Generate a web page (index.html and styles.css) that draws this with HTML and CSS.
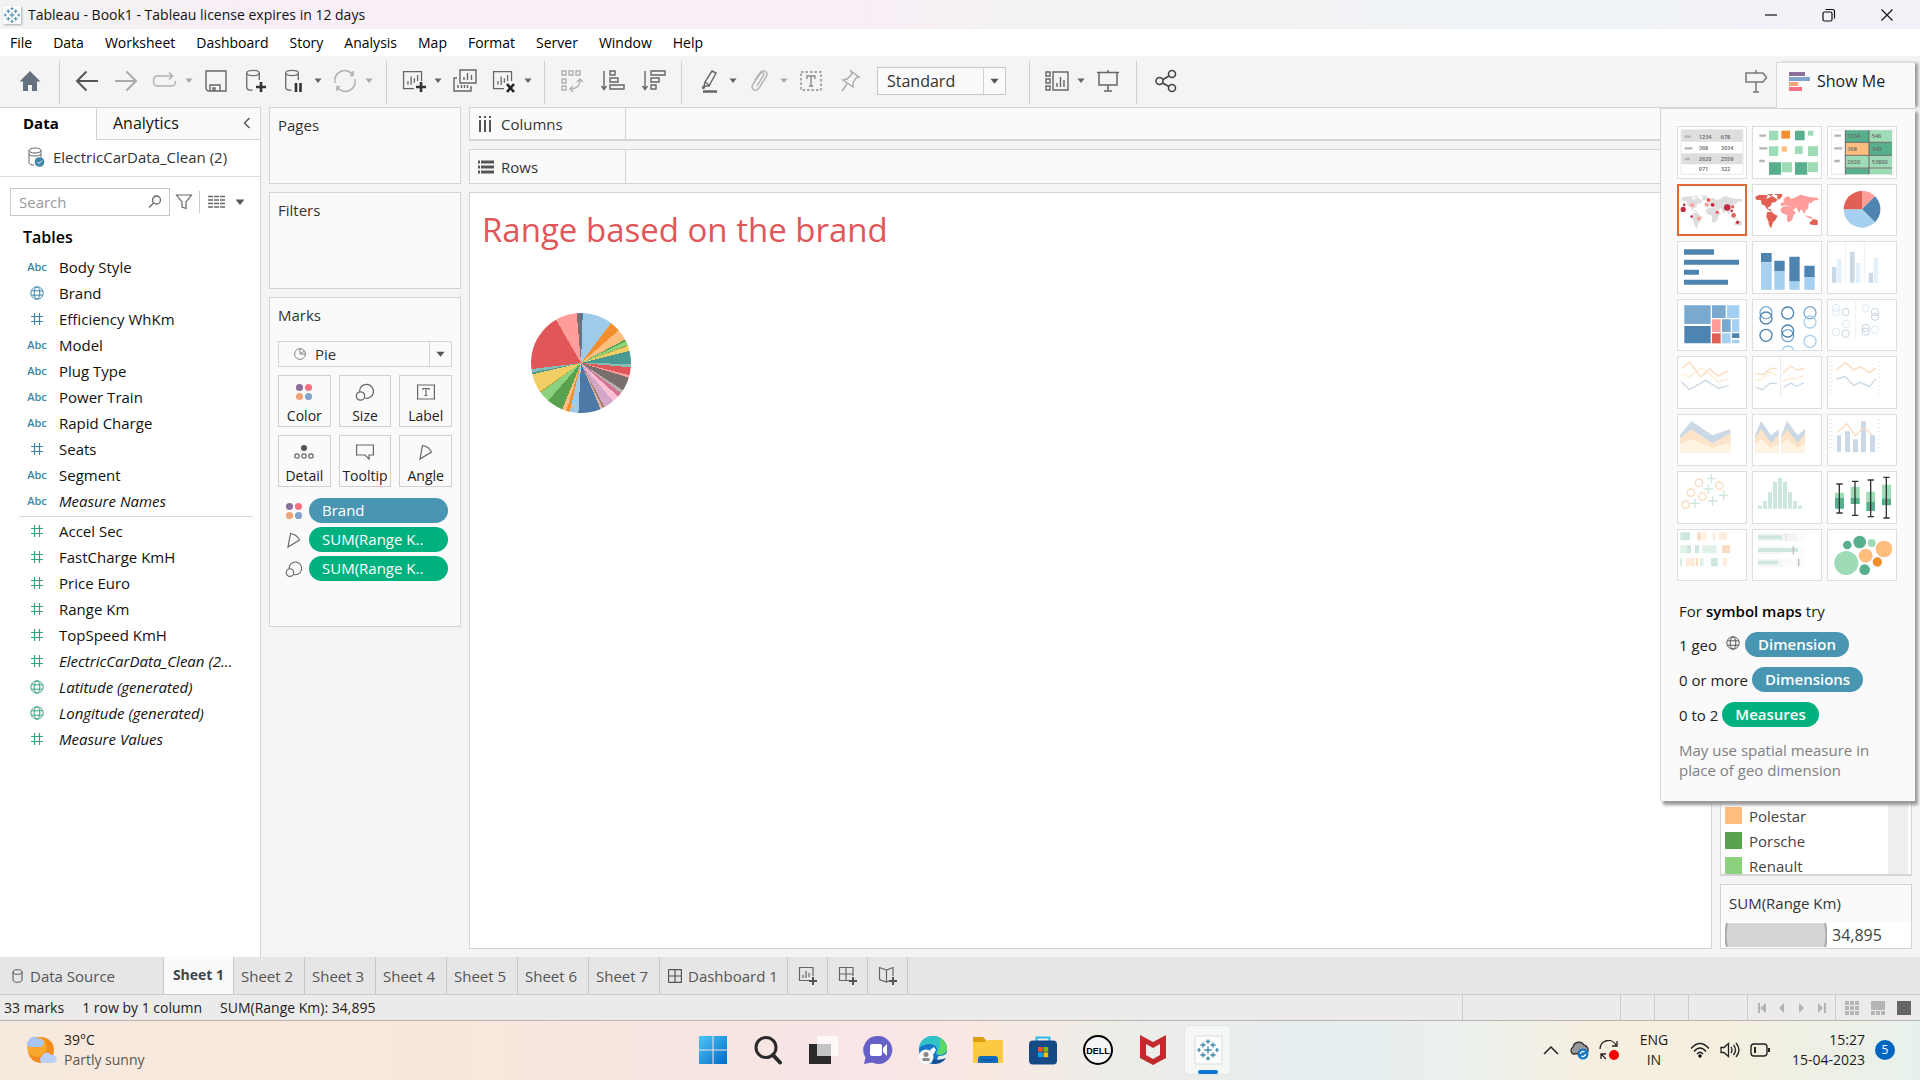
FILE: index.html
```html
<!DOCTYPE html>
<html lang="en">
<head>
<meta charset="utf-8">
<meta name="viewport" content="width=device-width, initial-scale=1">
<title>Tableau - Book1</title>
<link rel="stylesheet" href="styles.css">
</head>
<body>
<svg class="defs" aria-hidden="true">
  <symbol id="globe" viewBox="0 0 14 14"><g fill="none" stroke="currentColor" stroke-width="1"><circle cx="7" cy="7" r="6.200"/><ellipse cx="7" cy="7" rx="2.800" ry="6.200"/><path d="M1.500 4.800h11M1.500 9.200h11"/></g></symbol>
  <symbol id="hash" viewBox="0 0 14 14"><path d="M4.500 1v12M9.500 1v12M1 4.500h12M1 9.500h12" fill="none" stroke="currentColor" stroke-width="1.200"/></symbol>
  <symbol id="dots" viewBox="0 0 18 18"><circle cx="4.500" cy="4.500" r="3.600" fill="#8b6f9b"/><circle cx="13.500" cy="4.500" r="3.600" fill="#fa7083"/><circle cx="4.500" cy="13.500" r="3.600" fill="#f2a479"/><circle cx="13.500" cy="13.500" r="3.600" fill="#81a4cd"/></symbol>
  <symbol id="size" viewBox="0 0 20 18"><g fill="none" stroke="#666" stroke-width="1.200"><path d="M4.500 8.500a7 7 0 1 1 5 6.500"/><circle cx="5.500" cy="13" r="4.200"/></g></symbol>
  <symbol id="angle" viewBox="0 0 18 18"><path d="M5.500 2.500L3 16L14.500 9C13 6 9.500 3 5.500 2.500z" fill="none" stroke="#666" stroke-width="1.200"/></symbol>
  <symbol id="tri" viewBox="0 0 10 6"><path d="M.5.5h9L5 6z" fill="currentColor"/></symbol>
  <symbol id="db" viewBox="0 0 24 24"><g fill="none" stroke="#707070" stroke-width="1.400"><ellipse cx="10" cy="4" rx="6.300" ry="2.600"/><path d="M3.700 4v14.500c0 1.800 2.500 2.800 5.800 2.800M16.300 4v7"/></g></symbol>
  <symbol id="sheet" viewBox="0 0 24 24"><g fill="none" stroke="#666" stroke-width="1.400"><path d="M21.300 12V1.700H1.700v18.600H13"/><path d="M6.500 16v-4M10 16V7M13.500 14V9M17 12V5.500"/></g></symbol>
  <symbol id="plus" viewBox="0 0 10 10"><path d="M5 0v10M0 5h10" stroke="#333" stroke-width="2.600"/></symbol>
  <symbol id="logo" viewBox="0 0 24 24"><path d="M12 8.500v7M8.500 12h7M12 1.500v4M10 3.500h4M12 18.500v4M10 20.500h4M7 4.500v5M4.500 7h5M17 4.500v5M14.500 7h5M7 14.500v5M4.500 17h5M17 14.500v5M14.500 17h5M3 10v4M1.500 12h3M21 10v4M19.500 12h3" stroke="#3f86ad" stroke-width="1.300" fill="none"/></symbol>
  <symbol id="world" viewBox="0 0 204 150"><path d="M6 36L18 30L44 30L40 42L58 33L74 44L66 52L56 53L54 62L44 68L46 72L52 72L58 80L48 76L40 70L36 62L26 58L24 46L10 44z M42 28L60 27L54 34z M62 27L88 27L86 36L78 44L72 40L74 32z"/><path d="M42 82L56 80L64 88L74 92L68 104L60 112L54 130L48 120L46 108L40 96z"/><path class="east" d="M82 72L92 64L106 64L116 68L122 78L130 82L122 90L118 104L108 112L102 108L102 90L96 88L86 84z M82 62L84 54L92 52L92 42L102 34L110 36L114 42L130 36L142 29L168 36L194 38L196 46L188 46L180 48L176 54L168 54L166 62L166 72L158 74L156 86L152 84L148 76L142 74L140 84L134 76L128 66L122 76L114 66L104 62L96 60L88 62z M154 90L176 96L182 102L168 100z"/><path d="M170 112L182 102L194 106L194 120L182 120L170 118z"/></symbol>
</svg>

<div class="app">
  <header class="titlebar">
    <span class="app-icon"><svg width="18" height="18"><use href="#logo"/></svg></span>
    <span class="app-title">Tableau - Book1 - Tableau license expires in 12 days</span>
    <div class="window-buttons">
      <button aria-label="Minimise"><svg width="14" height="14"><path d="M1 7h12" stroke="#111" stroke-width="1.200"/></svg></button>
      <button aria-label="Restore"><svg width="14" height="14" fill="none" stroke="#111" stroke-width="1.200"><rect x="1" y="4" width="9" height="9" rx="1.500"/><path d="M3.500 1.500h7a2 2 0 0 1 2 2v7"/></svg></button>
      <button aria-label="Close"><svg width="14" height="14"><path d="M1.500 1.500l11 11M12.500 1.500l-11 11" stroke="#111" stroke-width="1.200"/></svg></button>
    </div>
  </header>

  <nav class="menubar">
    <button>File</button><button>Data</button><button>Worksheet</button><button>Dashboard</button><button>Story</button><button>Analysis</button><button>Map</button><button>Format</button><button>Server</button><button>Window</button><button>Help</button>
  </nav>

  <div class="toolbar">
    <div class="group home">
      <button aria-label="Home"><svg viewBox="0 0 24 24"><path d="M12 2L1.500 12.500H5V22h5v-6h4v6h5v-9.500h3.500z" fill="#667180"/></svg></button>
    </div>
    <div class="group">
      <button aria-label="Back"><svg viewBox="0 0 24 24" fill="none" stroke="#555" stroke-width="2"><path d="M23 12H2M11.500 2.500L2 12l9.500 9.500"/></svg></button>
      <button aria-label="Forward"><svg viewBox="0 0 24 24" fill="none" stroke="#aaa" stroke-width="2"><path d="M1 12h21M12.500 2.500L22 12l-9.500 9.500"/></svg></button>
      <div class="split off"><button aria-label="Replay"><svg viewBox="0 0 24 24" fill="none" stroke="#b0b0b0" stroke-width="1.500"><path d="M19 7H4.500a4 4 0 0 0-4 4v2a4 4 0 0 0 4 4h14a4 4 0 0 0 4-4v-1"/><path d="M16 3.500L19.500 7 16 10.500"/></svg></button><button class="caret" aria-label="Replay options"><svg><use href="#tri"/></svg></button></div>
      <button aria-label="Save"><svg viewBox="0 0 24 24" fill="none" stroke="#666" stroke-width="1.400"><path d="M2 2h20v20H4l-2-2z"/><path d="M6 22v-6h10v6M9 22v-3h2v3"/></svg></button>
      <button aria-label="New data source"><svg viewBox="0 0 24 24"><use href="#db" width="24" height="24"/><use href="#plus" x="13" y="13" width="10" height="10"/></svg></button>
      <div class="split"><button aria-label="Pause updates"><svg viewBox="0 0 24 24"><use href="#db" width="24" height="24"/><path d="M14 14v9M18.500 14v9" stroke="#333" stroke-width="2.600"/></svg></button><button class="caret" aria-label="Pause options"><svg><use href="#tri"/></svg></button></div>
      <div class="split off"><button aria-label="Refresh"><svg viewBox="0 0 24 24" fill="none" stroke="#b0b0b0" stroke-width="1.500"><path d="M2 14A10 10 0 0 1 20 6M22 10a10 10 0 0 1-18 8M20 2v4.500M4 22v-4.500M17 6.500h3.500M3.500 17.500H7"/></svg></button><button class="caret" aria-label="Refresh options"><svg><use href="#tri"/></svg></button></div>
    </div>
    <div class="group">
      <div class="split"><button aria-label="New worksheet"><svg viewBox="0 0 24 24"><use href="#sheet" width="22" height="24"/><use href="#plus" x="14" y="13" width="10" height="10"/></svg></button><button class="caret" aria-label="New options"><svg><use href="#tri"/></svg></button></div>
      <button aria-label="Duplicate"><svg viewBox="0 0 24 24" fill="none" stroke="#666" stroke-width="1.400"><path d="M7 1h16v13H7zM11 11V8M14.500 11V4M18.500 11V6M4 9H1v13h17v-5M5 16v3M8.500 16v3M11.500 16v3M14.500 16v3"/></svg></button>
      <div class="split"><button aria-label="Clear sheet"><svg viewBox="0 0 24 24"><use href="#sheet" width="22" height="24"/><path d="M15 15l7 8M22 15l-7 8" stroke="#222" stroke-width="2.600"/></svg></button><button class="caret" aria-label="Clear options"><svg><use href="#tri"/></svg></button></div>
    </div>
    <div class="group sorting">
      <button aria-label="Swap"><svg viewBox="0 0 24 24" fill="none" stroke="#b0b0b0" stroke-width="1.400"><path d="M2 2h4v4H2zM9 2h4v4H9zM16 2h4v4h-4zM2 10h4v4H2zM2 17h4v4H2zM10 20c6 0 10-3 10-9M13 17l-3 3 3 3M17 13l3-3 3 3"/></svg></button>
      <button aria-label="Sort ascending"><svg viewBox="0 0 24 24" fill="none" stroke="#666" stroke-width="1.400"><path d="M3 2v18M.5 17L3 20.500 5.500 17M9 2h5v4H9zM9 9h8v4H9zM9 16h14v4H9z"/></svg></button>
      <button aria-label="Sort descending"><svg viewBox="0 0 24 24" fill="none" stroke="#666" stroke-width="1.400"><path d="M3 2v18M.5 17L3 20.500 5.500 17M9 2h14v4H9zM9 9h8v4H9zM9 16h5v4H9z"/></svg></button>
    </div>
    <div class="group">
      <div class="split"><button aria-label="Highlight"><svg viewBox="0 0 24 24" fill="none" stroke="#666" stroke-width="1.400"><path d="M15 2l4 2-7 13H7l1-4zM8 13l4 3"/><path d="M6 22.500h14M5 19l3-1" stroke-width="2.400"/></svg></button><button class="caret" aria-label="Highlight options"><svg><use href="#tri"/></svg></button></div>
      <div class="split off"><button aria-label="Group"><svg viewBox="0 0 24 24" fill="none" stroke="#b0b0b0" stroke-width="1.400"><path d="M9 17l6-10c2-3-1-5-3-2L5 15c-3 5 3 9 6 4l7-11c3-5-3-9-6-4L7 11"/></svg></button><button class="caret" aria-label="Group options"><svg><use href="#tri"/></svg></button></div>
      <button aria-label="Show mark labels"><svg viewBox="0 0 24 24" fill="none" stroke="#888" stroke-width="1.400"><path d="M2 3h20v18H2z" stroke-dasharray="2.500 2"/><path d="M8 10V7h8v3M12 7v10M10 17h4"/></svg></button>
      <button aria-label="Fix axes"><svg viewBox="0 0 24 24" fill="none" stroke="#aaa" stroke-width="1.400"><path d="M13 2l8 6-3 1-3 5 0 4L5 11l4-1 5-5zM9 15l-5 7"/></svg></button>
      <div class="fit"><select aria-label="Fit"><option>Standard</option></select><span class="drop"><svg><use href="#tri"/></svg></span></div>
    </div>
    <div class="group">
      <div class="split"><button aria-label="Show cards"><svg viewBox="0 0 24 24" fill="none" stroke="#666" stroke-width="1.400"><path d="M1 3h4v4H1zM1 10h4v4H1zM1 17h4v4H1zM8 3h15v18H8zM12 18v-4M15.500 18V8M19 18v-7"/></svg></button><button class="caret" aria-label="Card options"><svg><use href="#tri"/></svg></button></div>
      <button aria-label="Presentation mode"><svg viewBox="0 0 24 24" fill="none" stroke="#666" stroke-width="1.500"><path d="M1 3.500h22M3 3.500v12.500h18V3.500M12 1v2M12 16v6M8 22h8"/></svg></button>
    </div>
    <div class="group last">
      <button aria-label="Share"><svg viewBox="0 0 24 24" fill="none" stroke="#444" stroke-width="1.600"><circle cx="5.500" cy="12" r="3.500"/><circle cx="18" cy="5" r="3.500"/><circle cx="18" cy="19" r="3.500"/><path d="M9 10.500L15 7M8.500 14l6.500 3.500"/></svg></button>
      <button aria-label="Guide"><svg viewBox="0 0 24 24" fill="none" stroke="#777" stroke-width="1.500"><path d="M2 4h17l3.500 4.500L19 13H2zM12 1v3M12 13v10M9 23h6"/></svg></button>
    </div>
  </div>

  <main class="workspace">
    <aside class="data-pane">
      <div class="pane-tabs">
        <button class="active">Data</button>
        <button>Analytics <svg width="8" height="12"><path d="M6.500 1L1.500 6l5 5" fill="none" stroke="#555" stroke-width="1.400"/></svg></button>
      </div>
      <a class="source" href="#source"><svg width="18" height="20" viewBox="0 0 18 20"><g fill="none" stroke="#666"><ellipse cx="8" cy="3.500" rx="6" ry="2.500"/><path d="M2 3.500v12c0 1.500 2 2.500 5 2.500M14 3.500v7M2 7.500c2 2 10 2 12 0"/></g><circle cx="12.500" cy="15" r="4.800" fill="#3b87a8"/><path d="M10.500 15l1.500 1.500 3-3" fill="none" stroke="#fff"/></svg>ElectricCarData_Clean (2)</a>
      <div class="search-row">
        <label class="search"><input type="text" placeholder="Search" aria-label="Search"><svg width="14" height="14"><g fill="none" stroke="#666" stroke-width="1.300"><circle cx="8.500" cy="5" r="4"/><path d="M5.500 8L1 12.500"/></g></svg></label>
        <button aria-label="Filter"><svg width="18" height="18"><path d="M1.500 2h15L11 9v6.500l-4-1.500V9z" fill="none" stroke="#666" stroke-width="1.200"/></svg></button>
        <button class="view" aria-label="View as"><svg width="17" height="14"><path d="M0 1.500h17M0 5h17M0 8.500h17M0 12h17" stroke="#666" stroke-width="1.600" stroke-dasharray="5 1"/></svg><svg width="10" height="6"><use href="#tri"/></svg></button>
      </div>
      <h2>Tables</h2>
      <ul class="fields dims">
        <li><b>Abc</b>Body Style</li>
        <li><svg><use href="#globe"/></svg>Brand</li>
        <li><svg><use href="#hash"/></svg>Efficiency WhKm</li>
        <li><b>Abc</b>Model</li>
        <li><b>Abc</b>Plug Type</li>
        <li><b>Abc</b>Power Train</li>
        <li><b>Abc</b>Rapid Charge</li>
        <li><svg><use href="#hash"/></svg>Seats</li>
        <li><b>Abc</b>Segment</li>
        <li><b>Abc</b><i>Measure Names</i></li>
      </ul>
      <ul class="fields measures">
        <li><svg><use href="#hash"/></svg>Accel Sec</li>
        <li><svg><use href="#hash"/></svg>FastCharge KmH</li>
        <li><svg><use href="#hash"/></svg>Price Euro</li>
        <li><svg><use href="#hash"/></svg>Range Km</li>
        <li><svg><use href="#hash"/></svg>TopSpeed KmH</li>
        <li><svg><use href="#hash"/></svg><i>ElectricCarData_Clean (2...</i></li>
        <li><svg><use href="#globe"/></svg><i>Latitude (generated)</i></li>
        <li><svg><use href="#globe"/></svg><i>Longitude (generated)</i></li>
        <li><svg><use href="#hash"/></svg><i>Measure Values</i></li>
      </ul>
    </aside>

    <div class="cards">
      <section class="card pages"><h3>Pages</h3></section>
      <section class="card filters"><h3>Filters</h3></section>
      <section class="card marks">
        <h3>Marks</h3>
        <div class="mark-type"><svg width="12" height="12"><g fill="none" stroke="#888"><circle cx="6" cy="6" r="5.400"/><path d="M6 .5V6l4.500-3M6 6h5.500"/></g></svg><select aria-label="Mark type"><option>Pie</option></select><span class="drop"><svg><use href="#tri"/></svg></span></div>
        <div class="mark-buttons">
          <button><svg width="18" height="18"><use href="#dots"/></svg>Color</button>
          <button><svg width="20" height="18"><use href="#size"/></svg>Size</button>
          <button><svg width="18" height="18" fill="none" stroke="#666" stroke-width="1.200"><path d="M.6 2h16.800v14H.6zM6 7V5.500h6V7M9 5.500v7M7.500 12.500h3"/></svg>Label</button>
          <button><svg width="20" height="18"><circle cx="10" cy="5" r="3" fill="#555"/><g fill="none" stroke="#666" stroke-width="1.200"><circle cx="3" cy="13" r="2.200"/><circle cx="10" cy="13" r="2.200"/><circle cx="17" cy="13" r="2.200"/></g></svg>Detail</button>
          <button><svg width="18" height="18"><path d="M.6 2h16.800v10H13v4l-4-4H.6z" fill="none" stroke="#666" stroke-width="1.200"/></svg>Tooltip</button>
          <button><svg width="18" height="18"><use href="#angle"/></svg>Angle</button>
        </div>
        <ul class="mark-pills">
          <li><svg width="18" height="18"><use href="#dots"/></svg><span class="pill blue">Brand</span></li>
          <li><svg width="18" height="18"><use href="#angle"/></svg><span class="pill green">SUM(Range K..</span></li>
          <li><svg width="18" height="18"><use href="#size"/></svg><span class="pill green">SUM(Range K..</span></li>
        </ul>
      </section>
    </div>

    <div class="canvas">
      <div class="shelf columns"><span><svg width="14" height="16"><path d="M2 0v2M7 0v2M12 0v2M2 4v12M7 4v12M12 4v12" stroke="#555" stroke-width="2"/></svg>Columns</span></div>
      <div class="shelf rows"><span><svg width="16" height="14"><path d="M0 2h2M0 7h2M0 12h2M3 2h13M3 7h13M3 12h13" stroke="#555" stroke-width="3"/></svg>Rows</span></div>
      <div class="view-area">
        <section class="viz">
          <h1>Range based on the brand</h1>
          <div class="pie" role="img" aria-label="Range by brand"></div>
        </section>
        <aside class="legends">
          <section class="card legend">
            <ul>
              <li><span class="swatch polestar"></span>Polestar</li>
              <li><span class="swatch porsche"></span>Porsche</li>
              <li><span class="swatch renault"></span>Renault</li>
            </ul>
            <div class="scroll-track"></div>
          </section>
          <section class="card size-legend">
            <h3>SUM(Range Km)</h3>
            <div class="size-row"><svg width="102" height="24" viewBox="0 0 102 24"><path d="M2 0h98q4 12 0 24H2Q-2 12 2 0z" fill="#d4d4d4"/><path d="M2 0Q-1 12 2 24M100 0q3 12 0 24" fill="none" stroke="#a9a9a9" stroke-width="2"/></svg>34,895</div>
          </section>
        </aside>
      </div>
    </div>

    <aside class="show-me">
      <button class="show-tab"><svg width="21" height="20"><path fill="#8b6f9b" d="M0 1h16v4H0z"/><path fill="#81a4cd" d="M0 6h21v4H0z"/><path fill="#f2a479" d="M0 11h9v4H0z"/><path fill="#fa7083" d="M0 16h13v4H0z"/></svg>Show Me</button>
      <div class="show-body">
        <div class="thumbs">
          <button aria-label="Text table"><svg viewBox="117 379 204 150"><path d="M126 387h186v134H126z" fill="#fff" stroke="#ddd" stroke-width="2"/><path d="M127 388h184v35H127zM127 458h184v33H127z" fill="#dedede"/><path d="M137 408h18M137 443h23M137 475h15" stroke="#b4b4b4" stroke-width="7"/><g class="cell"><text x="179" y="415">1234</text><text x="245" y="415">678</text><text x="179" y="449">368</text><text x="245" y="449">3034</text><text x="179" y="482">2620</text><text x="245" y="482">2559</text><text x="179" y="512">971</text><text x="245" y="512">322</text></g></svg></button>
          <button aria-label="Heat map"><svg viewBox="342 379 204 150"><path d="M361 405h20M361 443h24M361 481h16" stroke="#b4b4b4" stroke-width="7"/><path fill="#9edcb7" d="M390 390h28v29h-28zM507 390h16v15h-16zM390 437h28v29h-28zM468 437h23v23h-23zM507 437h30v29h-30zM428 485h31v30h-31zM507 485h30v29h-30z"/><path fill="#57af8b" d="M468 390h29v29h-29zM390 485h36v37h-36zM468 485h37v37h-37z"/><path fill="#f28e2b" d="M427 390h26v24h-26z"/><path fill="#ffbe7d" d="M428 437h16v16h-16z"/></svg></button>
          <button aria-label="Highlight table"><svg viewBox="567 379 204 150"><path d="M577 388h185v133H577z" fill="#fff" stroke="#ddd" stroke-width="2"/><path d="M586 405h20M586 443h24M586 481h16" stroke="#b4b4b4" stroke-width="7"/><path fill="#57af8b" d="M619 389h71v36h-71zM690 426h69v38h-69zM619 503h71v18h-71z"/><path fill="#9edcb7" d="M690 389h69v36h-69zM619 465h140v36H619zM690 503h69v18h-69z"/><path fill="#ffbe7d" d="M619 426h71v38h-71z"/><path d="M619 389v132M690 389v132M618 425h141M618 464h141M618 502h141" stroke="#666" stroke-width="3"/><g class="cell"><text x="625" y="412">1234</text><text x="698" y="412">546</text><text x="625" y="451">368</text><text x="698" y="451">340</text><text x="625" y="489">2620</text><text x="698" y="489">53890</text></g></svg></button>
          <button class="selected" aria-label="Symbol map"><svg viewBox="117 552 204 150"><use href="#world" x="117" y="552" width="204" height="150" fill="#ddd"/><g fill="#c22b40"><circle cx="130" cy="622" r="8"/><circle cx="133" cy="608" r="4"/><circle cx="156" cy="644" r="4"/><circle cx="221" cy="608" r="6"/><circle cx="266" cy="616" r="10"/><circle cx="280" cy="627" r="4"/><circle cx="298" cy="662" r="5"/></g><g fill="#e15f55"><circle cx="208" cy="593" r="6"/><circle cx="235" cy="631" r="5"/><circle cx="283" cy="614" r="5"/><circle cx="286" cy="640" r="7"/></g><g fill="#ff9d9a"><circle cx="157" cy="609" r="6"/><circle cx="178" cy="650" r="6"/><circle cx="202" cy="607" r="6"/></g></svg></button>
          <button class="filled" aria-label="Filled map"><svg viewBox="0 0 204 150"><use href="#world" width="204" height="150" fill="#e15f55"/></svg></button>
          <button aria-label="Pie chart"><svg viewBox="567 552 204 150"><path fill="#ff9d9a" d="M669 625V570A55 55 0 0 1 708 586z"/><path fill="#4e84b0" d="M669 625L708 586A55 55 0 0 1 708 664z"/><path fill="#a5d0f0" d="M669 625L708 664A55 55 0 0 1 614 625z"/><path fill="#e15f55" d="M669 625H614A55 55 0 0 1 669 570z"/></svg></button>
          <button aria-label="Horizontal bars"><svg viewBox="117 724 204 150"><path fill="#4e84b0" d="M135 746h90v16h-90zM135 777h165v15H135zM135 807h45v15h-45zM135 837h132v15H135z"/></svg></button>
          <button aria-label="Stacked bars"><svg viewBox="342 724 204 150"><path fill="#4e84b0" d="M366 757h32v27h-32zM406 780h31v31h-31zM451 768h31v75h-31zM496 795h31v35h-31z"/><path fill="#a5d0f0" d="M366 785h32v82h-32zM406 811h31v56h-31zM451 842h31v25h-31zM496 830h31v37h-31z"/></svg></button>
          <button aria-label="Side-by-side bars"><svg viewBox="567 724 204 150"><path fill="#cbd9e6" d="M579 799h13v47h-13zM633 753h14v93h-14zM689 816h13v30h-13z"/><path fill="#e2f0fc" d="M594 775h13v71h-13zM651 787h13v59h-13zM704 772h13v74h-13z"/><path d="M620 724v122M676 724v122" stroke="#e8e8e8" stroke-width="2"/></svg></button>
          <button aria-label="Treemap"><svg viewBox="117 897 204 150"><path fill="#7aa9d0" d="M136 913h79v56h-79zM219 913h41v38h-41zM249 955h26v38h-26z"/><path fill="#4e84b0" d="M136 975h79v52h-79zM279 997h22v14h-22z"/><path fill="#a5d0f0" d="M264 913h37v38h-37zM279 955h22v38h-22zM249 997h26v30h-26zM279 1016h22v11h-22z"/><path fill="#ff9d9a" d="M219 955h26v38h-26z"/><path fill="#e15f55" d="M219 997h26v30h-26z"/></svg></button>
          <button aria-label="Circle views"><svg viewBox="342 897 204 150" fill="none" stroke-width="4"><g stroke="#7aa9d0"><circle cx="381" cy="935" r="18"/><circle cx="513" cy="935" r="18"/><circle cx="446" cy="1004" r="18"/></g><g stroke="#4e84b0"><circle cx="381" cy="951" r="18"/><circle cx="381" cy="1003" r="18"/><circle cx="446" cy="936" r="18"/><circle cx="446" cy="990" r="18"/></g><g stroke="#a5d0f0"><circle cx="513" cy="963" r="18"/><circle cx="513" cy="1021" r="18"/><circle cx="447" cy="1053" r="18"/></g></svg></button>
          <button aria-label="Side-by-side circles"><svg viewBox="567 897 204 150" fill="none" stroke-width="3"><g stroke="#dcebf8"><circle cx="591" cy="921" r="11"/><circle cx="591" cy="934" r="11"/><circle cx="621" cy="969" r="11"/><circle cx="680" cy="922" r="11"/><circle cx="708" cy="986" r="11"/><circle cx="591" cy="993" r="11"/></g><g stroke="#c4d5e4"><circle cx="620" cy="933" r="11"/><circle cx="620" cy="998" r="11"/><circle cx="708" cy="933" r="11"/><circle cx="708" cy="947" r="11"/><circle cx="680" cy="981" r="11"/><circle cx="680" cy="992" r="11"/></g><path d="M650 897v120" stroke="#e8e8e8" stroke-width="2"/></svg></button>
          <button aria-label="Continuous lines"><svg viewBox="117 48 204 150" fill="none" stroke-width="4"><path stroke="#fadcc0" d="M130 81l22-18 33 45 28-24 24 22 31-17"/><path stroke="#ffedd0" d="M130 100l22 7 33-26 28 18 24 23 31-7"/><path stroke="#cbd9e6" d="M127 122l24 24 49-28 38 24 31-8"/></svg></button>
          <button aria-label="Discrete lines"><svg viewBox="342 48 204 150" fill="none" stroke-width="4"><path stroke="#fadcc0" d="M349 97l25 3 20-18h20M433 97l22-22 17 12 23-4"/><path stroke="#ffedd0" d="M349 118l20-4 22-22 22 12M433 119l22-8 17 4 23-12"/><path stroke="#cbd9e6" d="M350 139l22 7 20-19h22M433 139l22-13 17 9 23-9"/><path d="M425 48v122" stroke="#e0e0e0" stroke-width="2"/></svg></button>
          <button aria-label="Dual lines"><svg viewBox="567 48 204 150" fill="none" stroke-width="4"><path stroke="#fadcc0" d="M592 87l27-22 26 22 18-10 28 18 20-14"/><path stroke="#cbd9e6" d="M592 115l26-9 27 28 18-10 28 13 20-24"/><path d="M576 60v100M721 60v100" stroke="#e8e8e8" stroke-width="9" stroke-dasharray="2 10"/></svg></button>
          <button aria-label="Continuous area"><svg viewBox="117 221 204 150"><path fill="#cbd9e6" d="M123 282l34-43 63 43 54-19v70H123z"/><path fill="#fde4c8" d="M123 290l34-26 63 42 54-30v57H123z"/><path fill="#fff3e4" d="M123 308l34-14 63 25 54-15v29H123z"/></svg></button>
          <button aria-label="Discrete area"><svg viewBox="342 221 204 150"><path fill="#cbd9e6" d="M348 282l18-43 30 43 23-19v70h-71zM427 282l17-43 32 43 22-19v70h-71z"/><path fill="#fde4c8" d="M348 290l18-26 30 42 23-26v53h-71zM427 290l17-26 32 42 22-30v57h-71z"/><path fill="#fff3e4" d="M348 308l18-14 30 25 23-13v27h-71zM427 308l17-14 32 25 22-14v28h-71z"/></svg></button>
          <button aria-label="Dual combination"><svg viewBox="567 221 204 150"><path fill="#cbd9e6" d="M594 282h12v51h-12zM618 270h15v63h-15zM642 294h15v39h-15zM666 240h15v93h-15zM693 282h15v51h-15z"/><path fill="none" stroke="#fadcc0" stroke-width="4" d="M597 272l26-25 26 36 25-25 27 24"/><path d="M576 233v100M721 233v100" stroke="#e8e8e8" stroke-width="9" stroke-dasharray="2 10"/></svg></button>
          <button aria-label="Scatter plot"><svg viewBox="117 394 204 150" fill="none" stroke-width="4"><g stroke="#fadcc0"><circle cx="180" cy="426" r="11"/><circle cx="241" cy="435" r="11"/><circle cx="156" cy="456" r="11"/><circle cx="190" cy="468" r="11"/><circle cx="140" cy="492" r="11"/></g><path stroke="#cde7dc" d="M217 400v28M203 414h28M208 431v28M194 445h28M254 450v28M240 464h28M221 467v28M207 481h28M168 474v28M154 488h28"/></svg></button>
          <button aria-label="Histogram"><svg viewBox="342 394 204 150"><path fill="#cde7dc" d="M357 495h12v9h-12zM372 480h12v24h-12zM387 455h12v49h-12zM402 423h12v81h-12zM417 411h12v93h-12zM432 423h12v81h-12zM447 454h12v50h-12zM462 480h12v24h-12zM477 495h12v9h-12z"/></svg></button>
          <button aria-label="Box plot"><svg viewBox="567 394 204 150"><path fill="#9edcb7" d="M588 456h27v15h-27zM635 438h27v33h-27zM682 453h26v30h-26zM729 432h27v43h-27z"/><path fill="#57af8b" d="M588 471h27v33h-27zM635 471h27v19h-27zM682 483h26v28h-26zM729 474h27v20h-27z"/><path d="M601 430v87M592 430h19M592 517h19M648 422v102M639 422h19M639 524h19M695 418v110M686 418h19M686 528h19M742 410v122M733 410h19M733 532h19" stroke="#333" stroke-width="4"/></svg></button>
          <button aria-label="Gantt"><svg viewBox="117 566 204 150"><path fill="#cde7dc" d="M124 573h29v24h-29zM144 612h12v24h-12zM168 612h12v24h-12zM216 650h20v25h-20zM124 650h5v25h-5z"/><path fill="#e0f2e7" d="M124 612h20v24h-20zM190 612h43v24h-43zM183 650h11v25h-11z"/><path fill="#fadcc0" d="M174 573h12v24h-12zM223 573h4v24h-4zM249 612h24v24h-24zM171 650h6v25h-6z"/><path fill="#ffeddb" d="M190 573h11v24h-11zM240 573h24v24h-24zM141 650h27v25h-27zM252 650h12v25h-12z"/></svg></button>
          <button aria-label="Bullet graph"><svg viewBox="342 566 204 150"><path fill="#f5f5f5" d="M357 576h120v23H357zM357 615h70v24h-70zM357 653h75v23h-75z"/><path fill="#fbfbfb" d="M477 576h20v23h-20zM427 615h70v24h-70zM432 653h65v23h-65z"/><path fill="#cde7dc" d="M357 582h72v12h-72zM357 620h120v12H357zM357 658h60v11h-60z"/><path fill="#bbb" d="M461 615h4v24h-4zM477 652h4v23h-4z"/><path fill="#e8e8e8" d="M438 576h6v23h-6z"/></svg></button>
          <button aria-label="Packed bubbles"><svg viewBox="567 566 204 150"><g fill="#9edcb7"><circle cx="622" cy="665" r="36"/><circle cx="698" cy="605" r="12"/></g><g fill="#57af8b"><circle cx="625" cy="611" r="13"/><circle cx="662" cy="602" r="19"/><circle cx="677" cy="685" r="16"/></g><g fill="#ffbe7d"><circle cx="680" cy="643" r="21"/><circle cx="735" cy="623" r="25"/></g><circle cx="715" cy="662" r="14" fill="#f28e2b"/></svg></button>
        </div>
        <div class="hint">
          <p>For <strong>symbol maps</strong> try</p>
          <p>1 geo <svg width="14" height="14"><use href="#globe"/></svg><span class="pill blue">Dimension</span></p>
          <p>0 or more <span class="pill blue">Dimensions</span></p>
          <p>0 to 2 <span class="pill green">Measures</span></p>
          <p class="note">May use spatial measure in place of geo dimension</p>
        </div>
      </div>
    </aside>
  </main>

  <nav class="sheet-tabs">
    <button class="datasource"><svg width="11" height="14"><g fill="none" stroke="#555"><ellipse cx="5.500" cy="3" rx="4.500" ry="2.300"/><path d="M1 3v8c0 3 9 3 9 0V3"/></g></svg>Data Source</button>
    <button class="current">Sheet 1</button><button>Sheet 2</button><button>Sheet 3</button><button>Sheet 4</button><button>Sheet 5</button><button>Sheet 6</button><button>Sheet 7</button>
    <button class="dash"><svg width="14" height="14"><path d="M.6.6h12.800v12.800H.6zM7 .6v12.800M.6 7h12.800" fill="none" stroke="#555" stroke-width="1.200"/></svg>Dashboard 1</button>
    <button class="add" aria-label="New worksheet"><svg width="20" height="20" viewBox="0 0 20 20"><path d="M15 10V1.500H1.500v13H11M5 12V9M8 12V5M11 11V7" fill="none" stroke="#666" stroke-width="1.200"/><path d="M15 11v8M11 15h8" stroke="#555" stroke-width="2"/></svg></button>
    <button class="add" aria-label="New dashboard"><svg width="20" height="20" viewBox="0 0 20 20"><path d="M15 10V1.500H1.500v13H11M8 1.500v13M1.500 8H15" fill="none" stroke="#666" stroke-width="1.200"/><path d="M15 11v8M11 15h8" stroke="#555" stroke-width="2"/></svg></button>
    <button class="add" aria-label="New story"><svg width="20" height="20" viewBox="0 0 20 20"><path d="M15 10V1.500L8.500 4 1.500 1.500v12L8.500 16l2.500-1M8.500 4v12" fill="none" stroke="#666" stroke-width="1.200"/><path d="M15 11v8M11 15h8" stroke="#555" stroke-width="2"/></svg></button>
  </nav>

  <footer class="status">
    <span>33 marks</span><span>1 row by 1 column</span><span>SUM(Range Km): 34,895</span>
    <div class="status-cells">
      <i></i><i></i><i></i><i></i>
      <div class="nav"><svg width="68" height="10" viewBox="0 0 68 10" fill="#b5b5b5"><path d="M0 0h2v10H0zM8 0v10L2 5zM26 0v10l-5-5zM41 0v10l5-5zM60 0v10l5-5zM66 0h2v10h-2z"/></svg></div>
      <div class="nav"><svg width="66" height="14" viewBox="0 0 66 14"><path fill="#b5b5b5" d="M0 0h4v4H0zM5 0h4v4H5zM10 0h4v4h-4zM0 5h4v4H0zM5 5h4v4H5zM10 5h4v4h-4zM0 10h4v4H0zM5 10h4v4H5zM10 10h4v4h-4zM26 0h14v9H26zM26 10h4v4h-4zM31 10h4v4h-4zM36 10h4v4h-4z"/><path fill="#666" d="M52 0h14v14H52z"/></svg></div>
    </div>
  </footer>
</div>

<footer class="taskbar">
  <a class="weather" href="#weather">
    <svg width="32" height="32" viewBox="0 0 32 32"><circle cx="16" cy="16" r="13" fill="#f28a1c"/><circle cx="12" cy="13" r="10" fill="#f7a92e"/><path d="M4 13a4 4 0 0 1 0-7 5 5 0 0 1 9-1 4 4 0 0 1 3 8z" fill="#a9c5f3"/><path d="M17 29a4 4 0 0 1 0-7 5 5 0 0 1 9-1 4 4 0 0 1 3 8z" fill="#b9d1f7"/></svg>
    <span>39°C<small>Partly sunny</small></span>
  </a>
  <div class="apps">
    <button aria-label="Start"><svg viewBox="0 0 30 30"><defs><linearGradient id="win" x2="1" y2="1"><stop stop-color="#4cc8fb"/><stop offset="1" stop-color="#0268c4"/></linearGradient></defs><path d="M1 1h13.500v13.500H1zM15.500 1H29v13.500H15.500zM1 15.500h13.500V29H1zM15.500 15.500H29V29H15.500z" fill="url(#win)"/></svg></button>
    <button aria-label="Search"><svg viewBox="0 0 30 30" fill="none" stroke="#2a2a2a"><circle cx="13" cy="12.500" r="10" stroke-width="3"/><path d="M20 20l7 7.500" stroke-width="4" stroke-linecap="round"/></svg></button>
    <button aria-label="Task view"><svg viewBox="0 0 30 30"><path d="M1 9h22v20H1z" fill="#2b2b2b"/><path d="M9 1h21v20H9z" fill="#fff" opacity=".72"/></svg></button>
    <button aria-label="Chat"><svg viewBox="0 0 30 30"><path d="M15 1a14 14 0 1 1-6 26.500L1 29l1.500-6.500A14 14 0 0 1 15 1z" fill="#6561c8"/><rect x="7" y="9" width="12" height="12" rx="2" fill="#fff"/><path d="M20 13l4-4v12l-4-4z" fill="#fff"/></svg></button>
    <button aria-label="Edge"><svg viewBox="0 0 30 30"><circle cx="15" cy="15" r="14" fill="#1677c9"/><path d="M1 13C2 5 8 1 15 1c8 0 14 6 14 12 0 5-4 7-8 7-3 0-4-2-2-4 1-4-3-7-7-7-5 0-9 2-11 4z" fill="#2fc3c6"/><path d="M22 3c5 2 7 7 7 10 0 5-4 7-8 7l-2-2 3-6z" fill="#5bd868"/><path d="M29.500 17c-2 3-5 4-9 4l-2 5 11-2z" fill="#ecebe6"/><path d="M12 20c2 5 9 6 16 3-3 5-8 6-13 6z" fill="#164f94"/><path d="M12 15l4-3 2 3-3 5z" fill="#fff"/><circle cx="8" cy="22" r="7.500" fill="#f7f7f7"/><circle cx="8" cy="19.500" r="2.500" fill="#888"/><path d="M4.500 23h7v3h-7z" fill="#888"/></svg></button>
    <button aria-label="File Explorer"><svg viewBox="0 0 30 30"><path d="M0 2h10l3 3v5H0z" fill="#dd9f0d"/><path d="M0 7h12l3-2h15v23H0z" fill="#fdc940"/><path d="M5 28v-4q0-3 3-3h14q3 0 3 3v4z" fill="#0f6cbd"/><path d="M8 25h14" stroke="#0a4a8a"/></svg></button>
    <button aria-label="Store"><svg viewBox="0 0 30 30"><path d="M8.500 6V2.500h13V6" fill="none" stroke="#2fb8ec" stroke-width="2"/><rect x="1" y="5.500" width="28" height="24" rx="4" fill="#164a86"/><path fill="#f25022" d="M10 12h4.700v4.700H10z"/><path fill="#7fba00" d="M15.500 12h4.700v4.700h-4.700z"/><path fill="#00a4ef" d="M10 17.500h4.700v4.700H10z"/><path fill="#ffb900" d="M15.500 17.500h4.700v4.700h-4.700z"/></svg></button>
    <button aria-label="Dell"><svg viewBox="0 0 30 30"><circle cx="15" cy="15" r="14" fill="#f5f5f5" stroke="#000" stroke-width="2"/><text class="dell" x="15" y="18.500" text-anchor="middle">DELL</text></svg></button>
    <button aria-label="McAfee"><svg viewBox="0 0 30 30"><path d="M2 0l13 7L28 0v23l-13 7-13-7zM8 9v11l7 4 7-4V9l-7 4z" fill="#c32a2e" fill-rule="evenodd"/></svg></button>
    <button class="running" aria-label="Tableau"><svg viewBox="0 0 30 30"><path d="M2 1h27v28H2z" fill="#fbfbfb" stroke="#ddd"/><use href="#logo" x="3" y="3" width="24" height="24"/></svg></button>
  </div>
  <div class="tray">
    <svg width="16" height="10"><path d="M1 9l7-7 7 7" fill="none" stroke="#222" stroke-width="1.500"/></svg>
    <svg width="20" height="20" viewBox="0 0 20 20"><path d="M4 14a4 4 0 0 1 0-7 6 6 0 0 1 11-2 5 5 0 0 1 3 8z" fill="#999" stroke="#333" stroke-width="1.300"/><circle cx="14" cy="14" r="5.500" fill="#1877c9"/><path d="M11.500 14a2.500 2.500 0 0 1 4-2M16.500 14a2.500 2.500 0 0 1-4 2" fill="none" stroke="#fff" stroke-width="1.300"/></svg>
    <svg width="20" height="20" viewBox="0 0 20 20"><path d="M1 9a8.500 8.500 0 0 1 16-4M18 1v5h-5M2 19v-5h5M2 14l5 5" fill="none" stroke="#222" stroke-width="1.300"/><circle cx="15" cy="15" r="5" fill="#f50000"/></svg>
    <span class="lang">ENG<br>IN</span>
    <svg width="20" height="16" viewBox="0 0 20 16"><g fill="none" stroke="#222" stroke-width="1.400"><path d="M1 6.500q9-10 18 0M4 9.500q6-7 12 0M7 12q3-3.500 6 0"/></g><circle cx="10" cy="14" r="1.700"/></svg>
    <svg width="20" height="16" viewBox="0 0 20 16"><g fill="none" stroke="#222" stroke-width="1.300"><path d="M1 5.500v5h3l4.500 4V1.500L4 5.500zM11 5q2 3 0 6M13.500 3q4 5 0 10M16 1q6 7 0 14"/></g></svg>
    <svg width="20" height="14" viewBox="0 0 20 14"><rect x="1" y="1" width="16" height="12" rx="3" fill="none" stroke="#222" stroke-width="1.400"/><path d="M4 4h2v6H4zM18 5h2v4h-2z" fill="#222"/></svg>
    <span class="clock">15:27<br>15-04-2023</span>
    <span class="badge">5</span>
  </div>
</footer>
</body>
</html>
```
FILE: styles.css
```css
* { box-sizing: border-box; margin: 0; padding: 0; }

body {
  display: flex;
  flex-direction: column;
  min-height: 100vh;
  font: 15px/20px "Open Sans", sans-serif;
  color: #333;
  background: #f4f4f4;
}

button, select, input { font: inherit; color: inherit; background: none; border: 0; border-radius: 0; outline: 0; }
svg { display: block; flex: none; }
ul { list-style: none; }
a { color: inherit; text-decoration: none; }
.defs { position: absolute; width: 0; height: 0; }
.app { display: flex; flex-direction: column; flex: 1; }

/* Window chrome */
.titlebar {
  display: flex;
  align-items: center;
  height: 29px;
  padding: 0 4px 0 3px;
  gap: 7px;
  font-size: 14px;
  color: #111;
  background: linear-gradient(90deg, #f3f3f3, #f8eef6 14%, #f8eef6 44%, #f3f2f3 54%, #eff3f6 82%, #f3f1f8);
}
.app-icon { background: #fafafa; box-shadow: 1px 1px 2px #aaa; }
.window-buttons { display: flex; margin-left: auto; }
.window-buttons button { display: grid; place-items: center; width: 58px; height: 29px; }
.menubar { display: flex; gap: 21px; height: 27px; padding: 0 10px; background: #fff; font-size: 14px; color: #000; }

/* Toolbar */
.toolbar {
  display: grid;
  grid-template-columns: 60px 327px 158px 137px 348px 107px 1fr;
  height: 51px;
  padding: 5px 0 3px;
}
.group { display: flex; align-items: center; gap: 15px; padding: 0 15px 4px; border-right: 1px solid #d0d0d0; }
.group.home { padding-left: 18px; }
.group.sorting { gap: 17px; }
.group.last { justify-content: space-between; border-right: 0; padding-right: 152px; padding-left: 17px; }
.toolbar button { display: grid; place-items: center; flex: none; width: 24px; height: 30px; color: #666; }
.toolbar button svg { width: 24px; height: 24px; }
.split { display: flex; gap: 6px; margin-right: -6px; }
.toolbar .caret { width: 12px; }
.toolbar .caret svg { width: 8px; height: 5px; }
.toolbar .off button { color: #aaa; }
.fit { display: flex; width: 129px; height: 28px; background: #fafafa; border: 1px solid #c8c8c8; font-size: 16px; }
.fit select { flex: 1; appearance: none; padding-left: 9px; min-width: 0; }
.drop { display: grid; place-items: center; width: 22px; border-left: 1px solid #d4d4d4; color: #555; }
.drop svg { width: 9px; height: 6px; }

/* Workspace */
.workspace {
  position: relative;
  display: grid;
  grid-template-columns: 261px 192px 1fr;
  column-gap: 8px;
  flex: 1;
}
.data-pane { background: #fff; border-right: 1px solid #d4d4d4; color: #111; }
.pane-tabs { display: grid; grid-template-columns: 96px 1fr; height: 33px; font-size: 16px; border-top: 1px solid #d4d4d4; }
.pane-tabs button { display: flex; align-items: center; justify-content: space-between; padding: 0 9px 2px 16px; background: #fafafa; border-left: 1px solid #d4d4d4; border-bottom: 1px solid #d4d4d4; }
.pane-tabs .active { padding-left: 23px; background: #fff; border: 0; font-weight: 700; font-size: 15px; color: #000; }
.source { display: flex; align-items: center; gap: 8px; height: 37px; padding: 0 0 2px 27px; border-bottom: 1px solid #ddd; color: #333; }
.search-row { display: flex; align-items: center; padding: 11px 0 0 10px; color: #555; }
.search { display: flex; align-items: center; width: 160px; height: 28px; padding: 0 7px 0 8px; border: 1px solid #c8c8c8; }
.search input { flex: 1; min-width: 0; }
.search input::placeholder { color: #999; opacity: 1; }
.search-row > button { display: flex; align-items: center; padding: 0 5px; }
.search-row .view { gap: 10px; height: 22px; margin-left: 1px; padding-left: 8px; border-left: 1px solid #ccc; }
.data-pane h2 { padding: 11px 0 7px 23px; font-size: 16px; line-height: 20px; font-weight: 600; color: #000; }
.fields li { display: flex; align-items: center; gap: 11px; height: 26px; padding-left: 26px; }
.fields b, .fields svg { width: 22px; text-align: center; font-size: 11px; font-weight: 600; }
.fields svg { height: 14px; }
.dims b, .dims svg { color: #3b87a8; }
.measures svg { color: #36a37c; }
.measures { margin: 2px 7px 0 19px; padding-top: 1px; border-top: 1px solid #d8d8d8; }
.measures li { padding-left: 7px; white-space: nowrap; }

.card { background: #fafafa; border: 1px solid #d4d4d4; }
.card h3 { font-size: 15px; line-height: 20px; font-weight: 400; }
.cards { display: flex; flex-direction: column; gap: 8px; }
.cards .card { padding: 7px 8px; }
.pages { height: 77px; }
.filters { height: 97px; }
.marks { height: 330px; }
.mark-type { display: flex; align-items: center; height: 26px; margin-top: 16px; padding-left: 15px; gap: 7px; border: 1px solid #d4d4d4; }
.mark-type select { flex: 1; min-width: 0; appearance: none; padding-left: 2px; }
.mark-type .drop { height: 24px; }
.mark-buttons { display: grid; grid-template-columns: repeat(3, 1fr); gap: 8px; margin-top: 8px; font-size: 14px; color: #222; }
.mark-buttons button { display: flex; flex-direction: column; align-items: center; justify-content: space-between; height: 52px; padding: 7px 0 1px; line-height: 18px; border: 1px solid #d0d0d0; }
.mark-pills { display: grid; gap: 4px; margin-top: 11px; padding: 0 4px 0 7px; }
.mark-pills li { display: flex; align-items: center; gap: 6px; }
.mark-pills .pill { flex: 1; }
.pill { display: inline-block; height: 25px; padding: 0 13px; border-radius: 13px; color: #fff; font-weight: 500; line-height: 24px; }
.blue { background: #4996b2; }
.green { background: #00b180; }

.canvas { display: flex; flex-direction: column; gap: 8px; padding: 0 8px 8px 0; min-width: 0; }
.shelf { height: 34px; background: #fafafa; border: 1px solid #d4d4d4; }
.shelf span { display: flex; align-items: center; gap: 7px; width: 156px; height: 33px; padding-left: 8px; border-right: 1px solid #d4d4d4; }
.columns { border-bottom-width: 2px; }
.columns span { height: 31px; gap: 9px; }
.rows { height: 35px; }
.view-area { display: grid; grid-template-columns: 1fr 192px; gap: 8px; flex: 1; }
.viz { padding: 15px 12px; background: #fff; border: 1px solid #d4d4d4; }
.viz h1 { font-size: 33px; line-height: 44px; font-weight: 500; color: #e15759; }
.pie {
  width: 100px;
  height: 100px;
  margin: 61px 0 0 49px;
  border-radius: 50%;
  background: conic-gradient(
    #4e79a7 2deg, #a0cbe8 0 37deg, #f28e2b 0 49deg, #ffbe7d 0 62deg, #59a14f 0 64deg, #8cd17d 0 69deg,
    #b6992d 0 70deg, #f1ce63 0 76deg, #499894 0 91deg, #86bcb6 0 95deg, #e15759 0 104deg, #ff9d9a 0 107deg,
    #79706e 0 123deg, #bab0ac 0 127deg, #d37295 0 132deg, #fabfd2 0 140deg, #d4a6c8 0 152deg, #9d7660 0 154deg,
    #d7b5a6 0 157deg, #4e79a7 0 183deg, #a0cbe8 0 193deg, #f28e2b 0 197deg, #ffbe7d 0 202deg, #59a14f 0 221deg,
    #8cd17d 0 234deg, #b6992d 0 235deg, #f1ce63 0 257deg, #499894 0 259deg, #86bcb6 0 263deg, #e15759 0 330deg,
    #ff9d9a 0 355deg, #79706e 0);
}
.legends { display: flex; flex-direction: column; gap: 8px; }
.legend { display: grid; grid-template-columns: 1fr 20px; align-items: end; flex: 1; padding-right: 3px; border-bottom-width: 2px; background: #fff; color: #444; }
.legend li { display: flex; gap: 7px; height: 25px; line-height: 25px; padding-left: 4px; }
.legend li:last-child { height: 20px; }
.swatch { width: 17px; height: 17px; margin-top: 3px; }
.polestar { background: #ffbe7d; }
.porsche { background: #59a14f; }
.renault { background: #8cd17d; }
.scroll-track { align-self: stretch; background: #efefef; }
.size-legend { height: 65px; }
.size-legend h3 { padding: 8px 8px 9px; }
.size-row { display: flex; align-items: center; gap: 5px; height: 26px; padding-left: 4px; font-size: 16px; background: #fff; color: #444; }

/* Show Me menu, floating over the sheet */
.show-me { position: absolute; top: -45px; right: 5px; width: 255px; color: #222; }
.show-tab { position: relative; z-index: 1; display: flex; align-items: center; gap: 7px; width: 139px; height: 46px; margin-left: auto; padding: 0 12px 9px; font-size: 16px; background: #fafafa; border: 1px solid #d8d8d8; border-width: 1px 0 0 1px; box-shadow: 4px 0 3px -1px #999; }
.show-body { padding: 17px 18px 0 16px; height: 693px; background: #fafafa; border: 1px solid #d8d8d8; border-width: 1px 0 0 1px; box-shadow: 3px 4px 3px #999; }
.thumbs { display: grid; grid-template-columns: repeat(3, 1fr); grid-template-rows: repeat(8, 1fr); gap: 5px; height: 455px; }
.thumbs button { background: #fff; border: 1px solid #dedede; overflow: hidden; }
.thumbs svg { width: 68px; height: 50px; }
.thumbs .selected { border: 2px solid #df6a35; }
.selected svg { width: 66px; }
.filled svg { --east: #ff9d9a; }
.east { fill: var(--east, inherit); }
.cell { font-size: 17px; font-weight: 600; fill: #666; }
.hint { margin: 14px 0 0 2px; }
.hint p { display: flex; align-items: center; gap: 4px; height: 35px; white-space: nowrap; }
.hint p:first-child { height: 32px; }
.hint strong { font-weight: 600; color: #000; }
.hint p svg { margin: 0 1px 4px 5px; color: #555; }
.hint .pill { font-weight: 600; }
.hint .note { display: block; height: auto; margin-top: 8px; white-space: normal; color: #808080; }

/* Sheet tabs and status bar */
.sheet-tabs { display: flex; height: 38px; background: #e6e6e6; border-bottom: 1px solid #ccc; color: #555; }
.sheet-tabs button { width: 71px; padding-right: 4px; border-right: 1px solid #c8c8c8; white-space: nowrap; }
.sheet-tabs .current { width: 70px; padding: 0 0 2px; background: #fafafa; font-size: 14px; font-weight: 700; color: #444; }
.sheet-tabs .datasource, .sheet-tabs .dash { display: flex; align-items: center; gap: 7px; }
.sheet-tabs .datasource { width: 164px; padding-left: 12px; }
.sheet-tabs .dash { width: 128px; padding-left: 8px; gap: 6px; }
.sheet-tabs .add { display: grid; place-items: center; width: 40px; padding: 0; }
.status { display: flex; align-items: center; gap: 18px; height: 25px; padding-left: 4px; background: #ebebeb; font-size: 14px; color: #222; }
.status-cells { display: grid; grid-template-columns: 158px 34px 34px 59px 88px 85px; height: 25px; margin-left: auto; }
.status-cells > * { border-left: 1px solid #ccc; }
.nav { display: grid; place-items: center; }

/* Taskbar */
.taskbar {
  display: grid;
  grid-template-columns: 1fr auto 1fr;
  align-items: center;
  height: 60px;
  padding-bottom: 2px;
  border-top: 1px solid #bdb5b3;
  background: linear-gradient(90deg, #f6e9dd, #fae7dc 24%, #f6e5e2 36%, #fae5e7 45%, #f9e8e2 51%, #edede8 58%, #e6eef1 69%, #eaf0ec 76%, #f6efe0 83%, #f4efdf 90%, #e7f1ec);
  font-size: 14px;
  line-height: 20px;
  color: #1c1c1c;
}
.weather { display: flex; align-items: center; gap: 7px; padding-left: 25px; }
.weather small { display: block; font-size: 14px; color: #5c5654; }
.apps { display: flex; }
.apps button { display: grid; place-items: center; width: 55px; height: 50px; }
.apps svg { width: 30px; height: 30px; }
.apps .running { width: 47px; margin: 0 4px; padding-top: 9px; align-content: space-between; background: #f5f7f6; border: 1px solid #e4e6e5; border-radius: 5px; }
.running::after { content: ""; width: 20px; height: 4px; border-radius: 2px; background: #0a78d4; }
.dell { font: 700 9px "Liberation Sans", sans-serif; }
.tray { display: flex; align-items: center; justify-content: flex-end; gap: 10px; padding-right: 25px; }
.lang { width: 30px; margin: 0 11px 0 10px; text-align: center; }
.clock { margin-left: 12px; text-align: right; }
.badge { width: 20px; height: 20px; border-radius: 50%; background: #0067c0; color: #fff; text-align: center; font-size: 12px; }
```
